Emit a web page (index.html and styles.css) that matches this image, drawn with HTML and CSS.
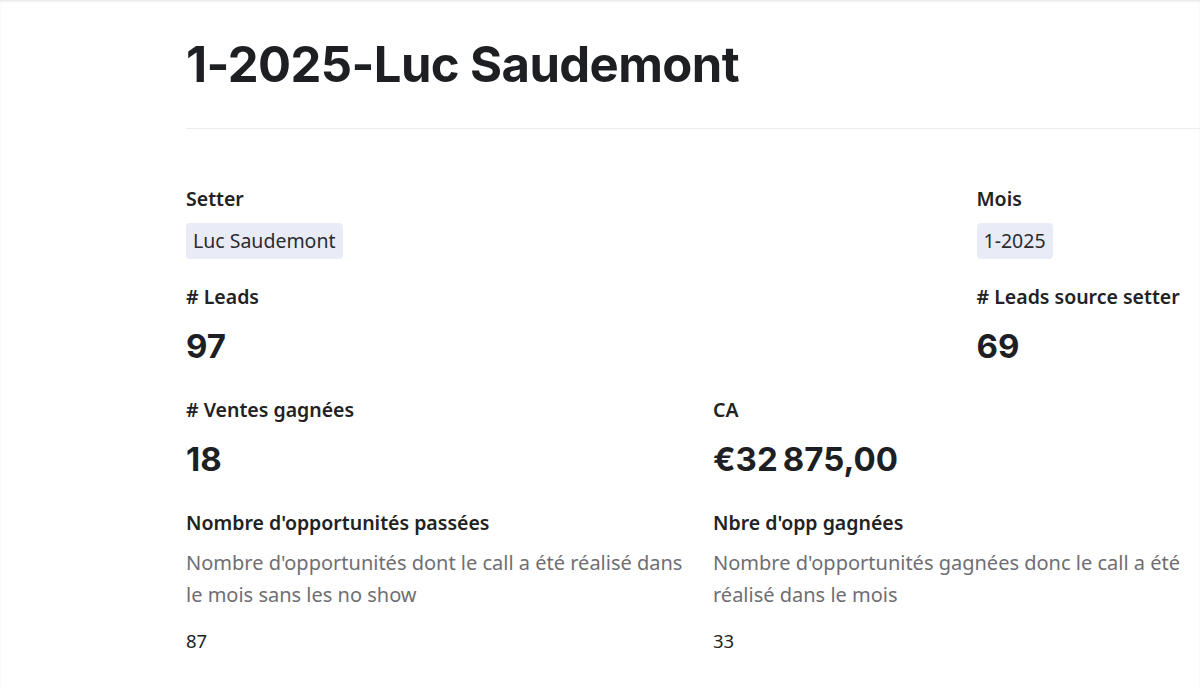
FILE: index.html
```html
<!DOCTYPE html>
<html lang="fr">
<head>
    <meta charset="UTF-8">
    <meta name="viewport" content="width=device-width, initial-scale=1.0">
    <title>1-2025-Luc Saudemont</title>
    <link rel="stylesheet" href="styles.css">
</head>
<body>
    <div class="page">
        <h1 class="title">1-2025-Luc Saudemont</h1>
        <div class="divider"></div>

        <div class="fields">
            <div class="field span-3">
                <div class="label">Setter</div>
                <span class="tag">Luc Saudemont</span>
            </div>
            <div class="field">
                <div class="label">Mois</div>
                <span class="tag">1-2025</span>
            </div>

            <div class="field span-3">
                <div class="label"># Leads</div>
                <div class="number">97</div>
            </div>
            <div class="field">
                <div class="label"># Leads source setter</div>
                <div class="number">69</div>
            </div>

            <div class="field span-2">
                <div class="label"># Ventes gagnées</div>
                <div class="number">18</div>
            </div>
            <div class="field span-2">
                <div class="label">CA</div>
                <div class="number">€32&#8239;875,00</div>
            </div>

            <div class="field span-2">
                <div class="label">Nombre d'opportunités passées</div>
                <p class="desc">Nombre d'opportunités dont le call a été réalisé dans le mois sans les no show</p>
                <div class="value">87</div>
            </div>
            <div class="field span-2">
                <div class="label">Nbre d'opp gagnées</div>
                <p class="desc">Nombre d'opportunités gagnées donc le call a été réalisé dans le mois</p>
                <div class="value">33</div>
            </div>
        </div>
    </div>
</body>
</html>
```

FILE: styles.css
```css
body {
    margin: 0;
    background-color: #fff;
    font-family: "Noto Sans", "Open Sans", sans-serif;
    color: #1f1f22;
    overflow: hidden;
}

.page {
    min-height: 100vh;
    padding: 0 0 0 186px;
    box-shadow: inset 0 2px 3px -1px rgba(0, 0, 0, 0.12);
}

.title {
    margin: 0;
    padding-top: 33px;
    font-family: Inter, "Liberation Sans", sans-serif;
    font-size: 49px;
    font-weight: 700;
    line-height: 63px;
    letter-spacing: -0.6px;
    color: #1e1f23;
}

.divider {
    height: 1px;
    margin-top: 32px;
    background-color: #ececec;
}

.fields {
    display: grid;
    grid-template-columns: repeat(4, 263.5px);
    padding-top: 58px;
}

.field {
    padding: 0 24px 26px 0;
}

.span-2 {
    grid-column: span 2;
}

.span-3 {
    grid-column: span 3;
}

.label {
    font-size: 19.5px;
    font-weight: 600;
    line-height: 24px;
    margin-bottom: 12px;
    color: #222;
    white-space: nowrap;
}

.tag {
    display: inline-block;
    padding: 0 7px;
    height: 36px;
    line-height: 36px;
    font-size: 19.5px;
    color: #2b2b2e;
    background-color: #e9ecf6;
    border-radius: 4px;
}

.number {
    font-family: Inter, "Liberation Sans", sans-serif;
    font-size: 33px;
    font-weight: 700;
    line-height: 51px;
    color: #1e1f23;
}

.desc {
    margin: 0 0 18px;
    font-size: 20px;
    line-height: 32px;
    color: #6e6e73;
}

.value {
    font-size: 18.5px;
    line-height: 24px;
    color: #222;
}
```
